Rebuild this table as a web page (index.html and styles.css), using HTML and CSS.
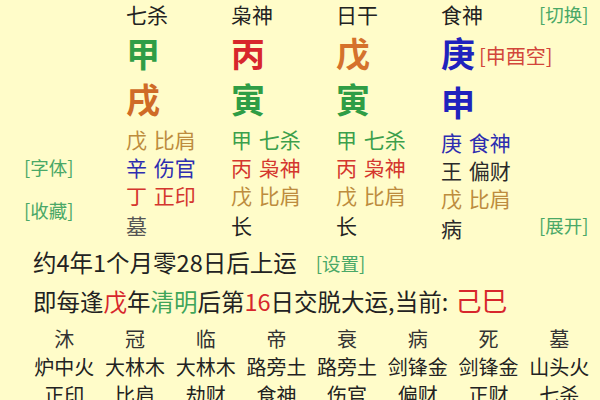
FILE: index.html
```html
<!DOCTYPE html>
<html lang="zh">
<head>
<meta charset="utf-8">
<link rel="stylesheet" href="styles.css">
</head>
<body>
<div class="page">
  <section class="pillars">
    <div class="side side-left">
      <span class="tag tag-font">[字体]</span>
      <span class="tag tag-fav">[收藏]</span>
    </div>
    <div class="col">
      <div class="god">七杀</div>
      <div class="stem c-wood">甲</div>
      <div class="branch c-earth">戌</div>
      <div class="hide first c-tan">戊 比肩</div>
      <div class="hide c-blue">辛 伤官</div>
      <div class="hide c-red">丁 正印</div>
      <div class="life c-gray">墓</div>
    </div>
    <div class="col">
      <div class="god">枭神</div>
      <div class="stem c-fire">丙</div>
      <div class="branch c-wood">寅</div>
      <div class="hide first c-green">甲 七杀</div>
      <div class="hide c-red">丙 枭神</div>
      <div class="hide c-tan">戊 比肩</div>
      <div class="life">长</div>
    </div>
    <div class="col">
      <div class="god">日干</div>
      <div class="stem c-earth2">戊</div>
      <div class="branch c-wood">寅</div>
      <div class="hide first c-green">甲 七杀</div>
      <div class="hide c-red">丙 枭神</div>
      <div class="hide c-tan">戊 比肩</div>
      <div class="life">长</div>
    </div>
    <div class="col col-last">
      <div class="god">食神</div>
      <div class="stem c-metal">庚<span class="void">[申酉空]</span></div>
      <div class="branch c-metal">申</div>
      <div class="hide first c-blue">庚 食神</div>
      <div class="hide c-dark">王 偏财</div>
      <div class="hide c-tan">戊 比肩</div>
      <div class="life c-dark">病</div>
    </div>
    <div class="side side-right">
      <span class="tag">[切换]</span>
      <span class="tag">[展开]</span>
    </div>
  </section>

  <p class="line">约4年1个月零28日后上运<span class="tag set">[设置]</span></p>
  <p class="line">即每逢<span class="hl-red">戊</span>年<span class="hl-green">清明</span>后第<span class="hl-red">16</span>日交脱大运,当前: <span class="dayun">己巳</span></p>

  <section class="cycle">
    <div class="cell stage">沐</div>
    <div class="cell stage">冠</div>
    <div class="cell stage">临</div>
    <div class="cell stage">帝</div>
    <div class="cell stage">衰</div>
    <div class="cell stage">病</div>
    <div class="cell stage">死</div>
    <div class="cell stage">墓</div>
    <div class="cell">炉中火</div>
    <div class="cell">大林木</div>
    <div class="cell">大林木</div>
    <div class="cell">路旁土</div>
    <div class="cell">路旁土</div>
    <div class="cell">剑锋金</div>
    <div class="cell">剑锋金</div>
    <div class="cell">山头火</div>
    <div class="cell">正印</div>
    <div class="cell">比肩</div>
    <div class="cell">劫财</div>
    <div class="cell">食神</div>
    <div class="cell">伤官</div>
    <div class="cell">偏财</div>
    <div class="cell">正财</div>
    <div class="cell">七杀</div>
  </section>
</div>
</body>
</html>
```

FILE: styles.css
```css
* { box-sizing: border-box; }

html, body {
  margin: 0;
  padding: 0;
  background: #fffcc9;
}

body {
  width: 600px;
  height: 400px;
  overflow: hidden;
  font-family: "Noto Sans CJK SC", "Noto Sans", sans-serif;
  color: #222;
}

.page {
  display: flex;
  flex-direction: column;
}

/* ---------- pillars ---------- */
.pillars {
  display: flex;
  height: 241px;
}

.side {
  display: flex;
  flex-direction: column;
}

.side-left {
  width: 126px;
  padding-left: 24px;
  padding-top: 153px;
}

.side-right {
  flex: 1;
  justify-content: space-between;
}

.tag {
  font-size: 18.5px;
  line-height: 28px;
  color: #4aa867;
  white-space: nowrap;
}

.side-right .tag:last-child {
  line-height: 32px;
}

.tag-fav {
  margin-top: 15px;
}

.col {
  width: 105px;
  display: flex;
  flex-direction: column;
  white-space: nowrap;
}

.col-last {
  width: 98px;
}

.god {
  font-size: 21px;
  line-height: 28px;
  color: #222;
}

.stem {
  font-size: 34px;
  line-height: 50px;
  font-weight: 700;
}

.branch {
  font-size: 34px;
  line-height: 42px;
  font-weight: 700;
}

.void {
  font-size: 20px;
  font-weight: 400;
  color: #d2463a;
  margin-left: 4px;
  vertical-align: 3px;
}

.hide {
  font-size: 21px;
  line-height: 28px;
  word-spacing: 2px;
}

.hide.first {
  margin-top: 5px;
}

.life {
  font-size: 21px;
  line-height: 32px;
  color: #222;
}

.c-wood  { color: #2f9d45; }
.c-fire  { color: #d7262c; }
.c-earth { color: #cf6b27; }
.c-earth2 { color: #d5722c; }
.c-metal { color: #1f22bd; }
.c-tan   { color: #bd8c3e; }
.c-blue  { color: #2d2db0; }
.c-red   { color: #d4362e; }
.c-green { color: #3c9f4c; }
.c-gray  { color: #555; }
.c-dark  { color: #2a2a2a; }

/* ---------- text lines ---------- */
.line {
  margin: 0;
  padding-left: 33px;
  font-size: 23.5px;
  line-height: 37px;
  white-space: nowrap;
  color: #222;
}

.line:first-of-type {
  margin-top: 3px;
}

.set {
  margin-left: 19px;
  vertical-align: 1px;
}

.hl-red { color: #d7262c; }
.hl-green { color: #3fa55a; }

.dayun {
  color: #d7262c;
  font-size: 26px;
  margin-left: 2px;
}

/* ---------- cycle grid ---------- */
.cycle {
  display: grid;
  grid-template-columns: repeat(8, 70.7px);
  padding-left: 29px;
  margin-top: 5px;
}

.cell {
  text-align: center;
  font-size: 20px;
  line-height: 28px;
  white-space: nowrap;
  color: #222;
}

.stage {
  color: #333;
}
```
